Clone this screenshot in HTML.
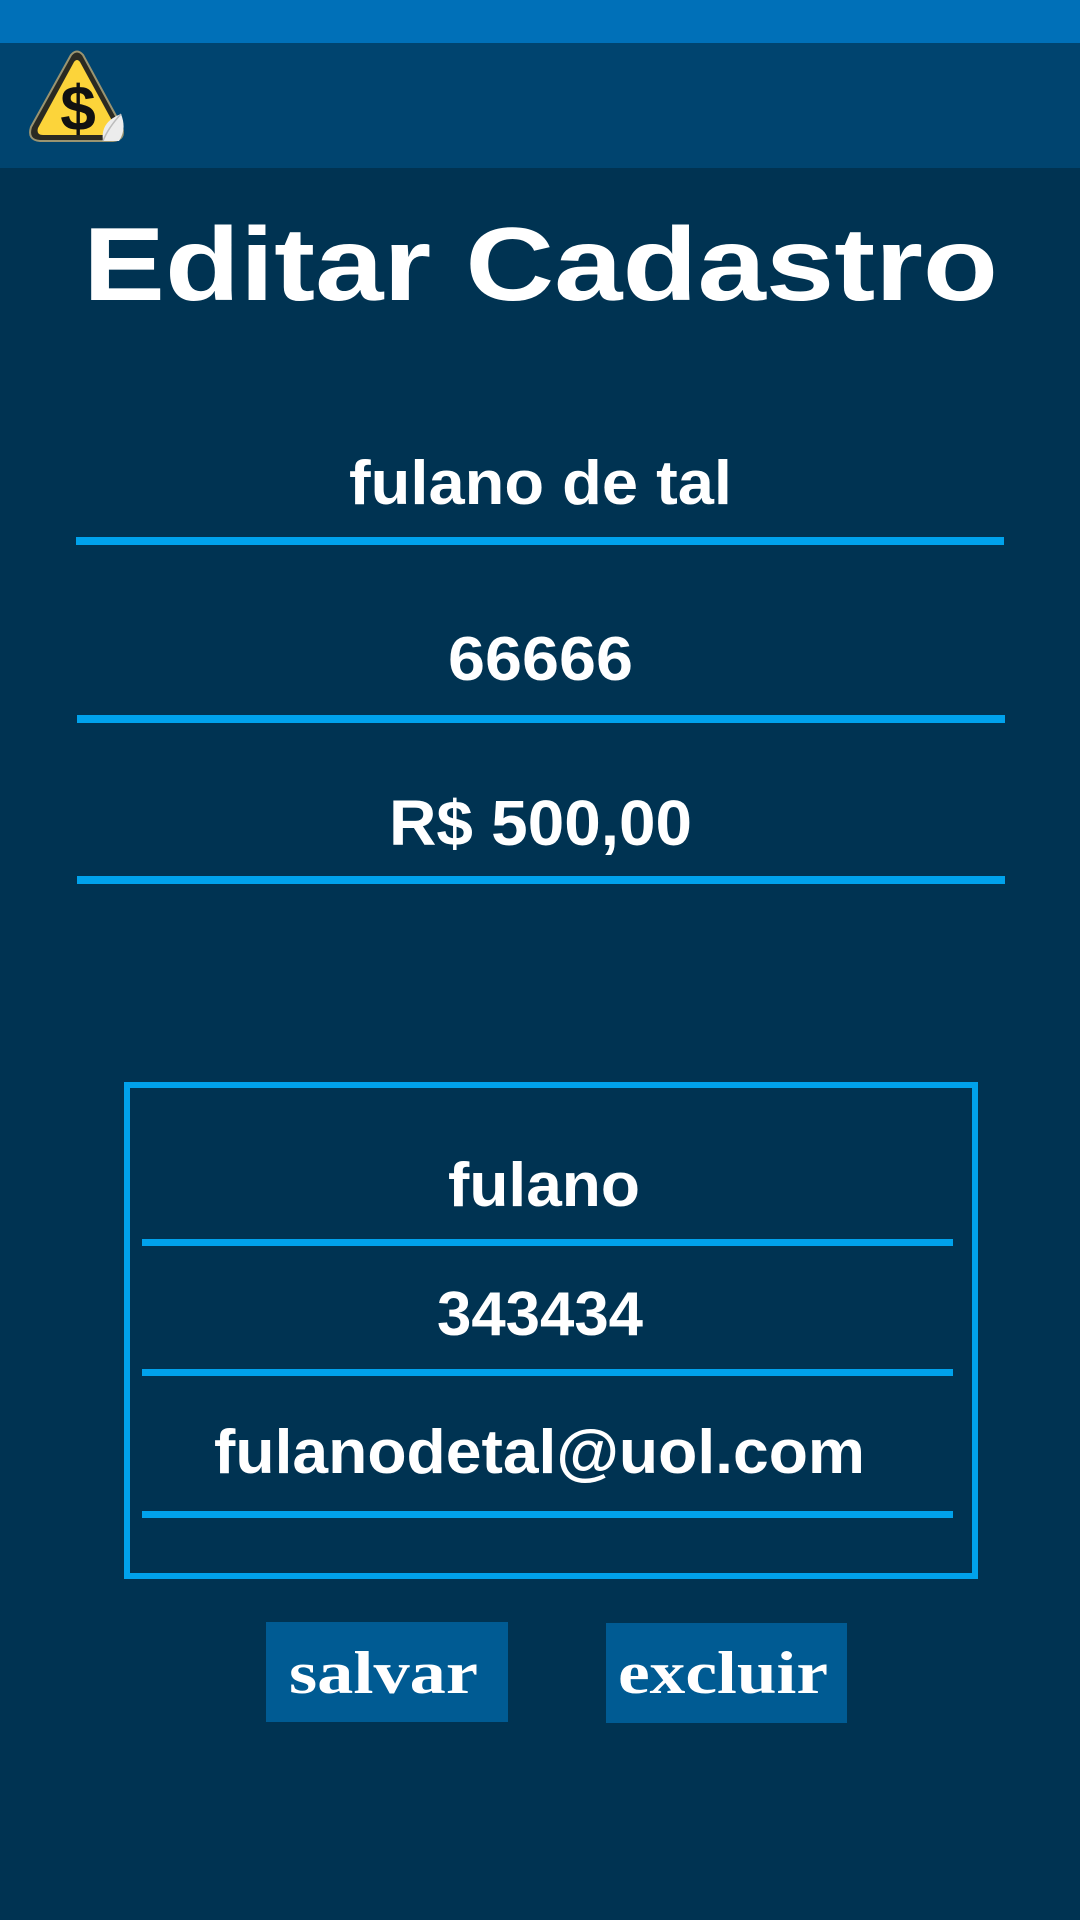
<!DOCTYPE html>
<html><head><meta charset="utf-8"><style>
html,body{margin:0;padding:0;}
body{width:1080px;height:1920px;background:#003352;overflow:hidden;position:relative;}
svg{position:absolute;left:0;top:0;}
</style></head><body>
<svg width="1080" height="1920" viewBox="0 0 1080 1920">
<rect x="0" y="0" width="1080" height="43" fill="#0070b8"/>
<rect x="0" y="43" width="1080" height="125" fill="#00446f"/>
<!-- logo -->
<path d="M71 55 Q77 48 83 55 L122 127 Q126 140 113 141 L40 141 Q27 140 31 127 Z" fill="#2a2a22" stroke="#9a9470" stroke-width="2"/>
<path d="M74 62 Q77 58 80 62 L116 128 Q118 135 111 135 L43 135 Q36 135 38 128 Z" fill="#fcd43a"/>
<text x="78" y="130" font-family="Liberation Sans, sans-serif" font-weight="bold" font-size="64" fill="#111" text-anchor="middle">$</text>
<path d="M103 141 Q100 122 121 114 Q127 129 119 141 Z" fill="#ececec"/>
<path d="M103 141 Q108 128 121 114" fill="none" stroke="#bbb" stroke-width="1.5"/>
<g font-family="'Liberation Sans',sans-serif" font-weight="bold" fill="#fff">
<text x="83" y="300" font-size="104" textLength="915" lengthAdjust="spacingAndGlyphs">Editar Cadastro</text>
<text x="349" y="504" font-size="62" textLength="383" lengthAdjust="spacingAndGlyphs">fulano de tal</text>
<text x="448" y="680" font-size="62" textLength="185" lengthAdjust="spacingAndGlyphs">66666</text>
<text x="389" y="845" font-size="64" textLength="303" lengthAdjust="spacingAndGlyphs">R$ 500,00</text>
<text x="448" y="1206" font-size="62" textLength="192" lengthAdjust="spacingAndGlyphs">fulano</text>
<text x="437" y="1335" font-size="62" textLength="206" lengthAdjust="spacingAndGlyphs">343434</text>
<text x="214" y="1473" font-size="62" textLength="651" lengthAdjust="spacingAndGlyphs">fulanodetal@uol.com</text>
</g>
<rect x="76" y="537" width="928" height="8" fill="#00a2ec"/>
<rect x="77" y="715" width="928" height="8" fill="#00a2ec"/>
<rect x="77" y="876" width="928" height="8" fill="#00a2ec"/>
<rect x="127" y="1085" width="848" height="491" fill="none" stroke="#00a2ec" stroke-width="6"/>
<rect x="142" y="1239" width="811" height="7" fill="#00a2ec"/>
<rect x="142" y="1369" width="811" height="7" fill="#00a2ec"/>
<rect x="142" y="1511" width="811" height="7" fill="#00a2ec"/>
<rect x="266" y="1622" width="242" height="100" fill="#005b93"/>
<rect x="606" y="1623" width="241" height="100" fill="#005b93"/>
<g font-family="'Liberation Serif',serif" font-weight="bold" fill="#fff">
<text x="289" y="1693" font-size="60" textLength="189" lengthAdjust="spacingAndGlyphs">salvar</text>
<text x="618" y="1693" font-size="60" textLength="210" lengthAdjust="spacingAndGlyphs">excluir</text>
</g>
</svg>
</body></html>
